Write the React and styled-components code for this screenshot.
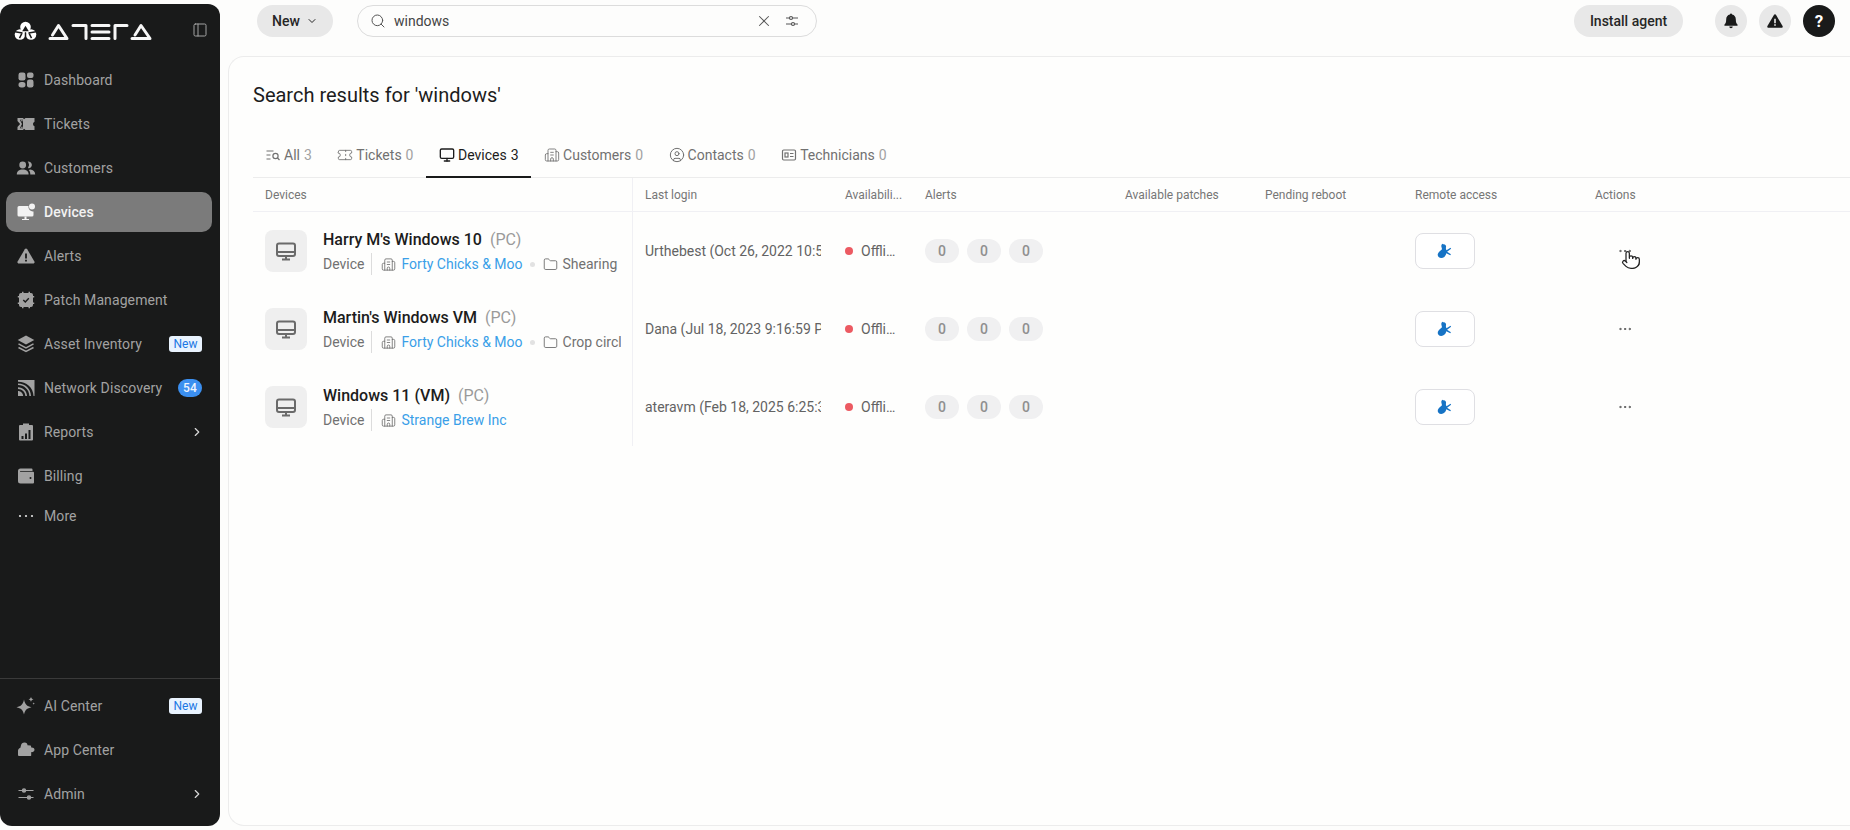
import React from 'react';
import styled, { createGlobalStyle } from 'styled-components';
import {
  Search, X, ChevronDown, ChevronRight, PanelLeft, Ticket, Monitor,
  Building2, CircleUser, Folder, Pointer, MoreHorizontal,
} from 'lucide-react';

const GlobalStyle = createGlobalStyle`
  html, body { margin: 0; padding: 0; height: 100%; background: #fdfdfc; }
  body { font-family: Roboto, "Liberation Sans", sans-serif; color: #1c1c1c; overflow: hidden; }
  * { box-sizing: border-box; }
`;

const COLUMNS = '380px 200px 80px 200px 140px 150px 180px 1fr';

const Shell = styled.div`
  display: flex;
  height: 830px;
`;

const Sidebar = styled.aside`
  width: 220px;
  flex: none;
  margin: 4px 0;
  background: #191a1a;
  border-radius: 12px;
  display: flex;
  flex-direction: column;
`;

const Brand = styled.div`
  height: 56px;
  flex: none;
  display: flex;
  align-items: center;
  justify-content: space-between;
  padding: 0 12px 4px 14px;
  color: #a3a3a3;
`;

const NavList = styled.nav`
  display: flex;
  flex-direction: column;
  gap: 4px;
  padding: 0 8px 0 6px;
`;

const BottomNav = styled(NavList)`
  margin-top: auto;
  padding-top: 7px;
  padding-bottom: 12px;
  border-top: 1px solid #3a3a3a;
`;

const NavItem = styled.a`
  height: ${(p) => (p.$short ? '32px' : '40px')};
  display: flex;
  align-items: center;
  gap: 8px;
  padding: 0 10px;
  border-radius: 10px;
  font-size: 14px;
  letter-spacing: 0.1px;
  color: ${(p) => (p.$active ? '#f2f2f2' : '#a2a2a2')};
  background: ${(p) => (p.$active ? '#7b7b7b' : 'transparent')};
  font-weight: ${(p) => (p.$active ? 500 : 400)};
`;

const NavIcon = styled.span`
  width: 20px;
  height: 20px;
  flex: none;
  display: flex;
  align-items: center;
  justify-content: center;
  color: ${(p) => (p.$active ? '#f2f2f2' : '#a2a2a2')};
`;

const NavLabel = styled.span`
  flex: 1;
  white-space: nowrap;
`;

const NewBadge = styled.span`
  height: 16px;
  width: 33px;
  border-radius: 3px;
  background: #e9f3fe;
  color: #1c78e4;
  font-size: 12px;
  line-height: 16px;
  text-align: center;
`;

const CountBadge = styled.span`
  height: 18px;
  width: 24px;
  border-radius: 9px;
  background: #3b8ff0;
  color: #eef5ff;
  font-size: 12px;
  font-weight: 500;
  line-height: 18px;
  text-align: center;
`;

const NavArrow = styled.span`
  display: flex;
  margin-right: -2px;
  color: #d8d8d8;
`;

const Main = styled.div`
  flex: 1;
  min-width: 0;
  margin-left: 8px;
  display: flex;
  flex-direction: column;
`;

const TopBar = styled.header`
  height: 56px;
  flex: none;
  display: flex;
  align-items: center;
  padding: 0 15px 14px 29px;
`;

const PillButton = styled.button`
  height: 32px;
  border: 0;
  border-radius: 16px;
  background: #e8e8e8;
  color: #262626;
  font: 500 14px Roboto, sans-serif;
  display: flex;
  align-items: center;
  justify-content: center;
  gap: 6px;
  width: ${(p) => p.$width};
  padding: 0;
`;

const SearchBox = styled.div`
  width: 460px;
  height: 32px;
  margin-left: 24px;
  border: 1px solid #dcdcdc;
  border-radius: 16px;
  display: flex;
  align-items: center;
  padding: 0 16px 0 12px;
  gap: 8px;
  color: #555;
  font-size: 14px;
`;

const SearchText = styled.span`
  flex: 1;
  color: #444;
`;

const SearchAction = styled.span`
  display: flex;
  margin-right: ${(p) => p.$gap || '0'};
`;

const TopActions = styled.div`
  margin-left: auto;
  display: flex;
  align-items: center;
`;

const RoundButton = styled.span`
  width: 32px;
  height: 32px;
  border-radius: 50%;
  margin-left: ${(p) => p.$gap || '12px'};
  display: flex;
  align-items: center;
  justify-content: center;
  background: ${(p) => (p.$dark ? '#191a1a' : '#e8e8e8')};
  color: ${(p) => (p.$dark ? '#fff' : '#191a1a')};
  font-size: 17px;
  font-weight: 700;
`;

const Panel = styled.main`
  flex: 1;
  min-height: 0;
  margin-bottom: 4px;
  border: 1px solid #ececec;
  border-right: 0;
  border-radius: 16px 0 0 16px;
  padding: 26px 0 0 24px;
  background: #fefefd;
`;

const Title = styled.h1`
  margin: 0;
  font-size: 20px;
  font-weight: 400;
  line-height: 24px;
  color: #1c1c1c;
`;

const Tabs = styled.div`
  margin-top: 27px;
  height: 44px;
  display: flex;
  border-bottom: 1px solid #ececec;
`;

const Tab = styled.div`
  height: 44px;
  padding: 0 12.5px 0 13px;
  display: flex;
  align-items: center;
  gap: 3px;
  font-size: 14px;
  color: ${(p) => (p.$active ? '#1c1c1c' : '#717171')};
  border-bottom: 2px solid ${(p) => (p.$active ? '#191a1a' : 'transparent')};
  margin-bottom: -1px;

  &:first-child {
    padding-left: 12px;
  }
`;

const TabCount = styled.span`
  color: ${(p) => (p.$active ? '#1c1c1c' : '#a2a2a2')};
  margin-left: 1px;
`;

const HeadRow = styled.div`
  display: grid;
  grid-template-columns: ${COLUMNS};
  height: 34px;
  border-bottom: 1px solid #f0f0f4;
`;

const HeadCell = styled.div`
  display: flex;
  align-items: center;
  padding-left: 12px;
  font-size: 12px;
  color: #767676;
  white-space: nowrap;
  ${(p) => p.$first && 'border-right: 1px solid #f0f0f4;'}
`;

const Row = styled.div`
  display: grid;
  grid-template-columns: ${COLUMNS};
  height: 78px;
`;

const Cell = styled.div`
  display: flex;
  align-items: center;
  padding-left: 12px;
  min-width: 0;
  font-size: 14px;
  color: #636363;
`;

const DeviceCell = styled(Cell)`
  gap: 16px;
  padding-right: 11px;
  border-right: 1px solid #f0f0f4;
`;

const DeviceTile = styled.span`
  width: 42px;
  height: 42px;
  flex: none;
  border-radius: 8px;
  background: #efefef;
  color: #6a6a6a;
  display: flex;
  align-items: center;
  justify-content: center;
`;

const DeviceInfo = styled.div`
  min-width: 0;
  flex: 1;
  overflow: hidden;
  padding-top: 2px;
`;

const DeviceName = styled.div`
  display: flex;
  gap: 8px;
  font-size: 16px;
  line-height: 22px;
  font-weight: 500;
  color: #1c1c1c;
  white-space: nowrap;
`;

const DeviceType = styled.span`
  color: #9a9a9a;
  font-weight: 400;
`;

const MetaRow = styled.div`
  display: flex;
  align-items: center;
  height: 22px;
  margin-top: 2px;
  color: #717171;
  white-space: nowrap;
`;

const MetaLabel = styled.span`
  padding-right: 7px;
  margin-right: 9px;
  line-height: 22px;
  border-right: 1px solid #dcdcdc;
`;

const MetaIcon = styled.span`
  display: flex;
  margin-right: 5px;
  color: #6a6a6a;
`;

const CustomerLink = styled.a`
  color: #3a9fe8;
`;

const MetaDot = styled.span`
  width: 5px;
  height: 5px;
  border-radius: 50%;
  background: #e2e2e2;
  margin: 0 8px 0 7px;
  flex: none;
`;

const LoginText = styled.span`
  width: 176px;
  overflow: hidden;
  white-space: nowrap;
`;

const StatusDot = styled.span`
  width: 8px;
  height: 8px;
  flex: none;
  border-radius: 50%;
  margin-right: 8px;
  background: #ec5a62;
`;

const StatusText = styled.span`
  width: 37px;
  overflow: hidden;
  white-space: nowrap;
  text-overflow: ellipsis;
`;

const PillGroup = styled.div`
  display: flex;
  gap: 8px;
`;

const CountPill = styled.span`
  width: 34px;
  height: 24px;
  border-radius: 12px;
  background: #f0f0f1;
  color: #8f8f8f;
  font-size: 14px;
  font-weight: 500;
  display: flex;
  align-items: center;
  justify-content: center;
`;

const RemoteButton = styled.button`
  width: 60px;
  height: 36px;
  padding: 0;
  border: 1px solid #dfdfe3;
  border-radius: 8px;
  background: #fff;
  display: flex;
  align-items: center;
  justify-content: center;
`;

const ActionsCell = styled(Cell)`
  position: relative;
  padding-left: 34px;
  color: #555;
`;

const HandCursor = styled.span`
  position: absolute;
  left: 38px;
  top: 38px;
  display: flex;
  color: #222;
`;

const s = { width: 20, height: 20, viewBox: '0 0 20 20', fill: 'currentColor' };

const DashboardIcon = () => (
  <svg {...s}>
    <rect x="2.5" y="2.5" width="7" height="8" rx="2.2" />
    <rect x="11" y="2.5" width="6.5" height="5.5" rx="2" />
    <rect x="2.5" y="12" width="7" height="5.5" rx="2.7" />
    <rect x="11" y="9.5" width="6.5" height="8" rx="2.2" />
  </svg>
);

const TicketIcon = () => (
  <svg {...s}>
    <path d="M1.5 4h5.500l1 1.300L9.500 4h9v3.700a2.500 2.500 0 0 0 0 4.600V16h-9L8 14.700 7 16H1.500v-3l2.600-3-2.600-3z" />
    <path d="M7 5.700H3.800L6 10l-2.200 4.300H7z" fill="#191a1a" />
    <path d="M4.800 6.300h2v1h-2zM4.800 12.700h2v1h-2z" />
  </svg>
);

const CustomersIcon = () => (
  <svg {...s}>
    <circle cx="6.7" cy="7" r="3.4" />
    <path d="M.8 16.500c0-3.400 2.300-5 5.900-5s5.900 1.600 5.900 5z" />
    <path d="M11.300 3.700a3.400 3.400 0 1 1 1.300 6.600c-.6 0-.7-.3-.4-.7a4.800 4.800 0 0 0 .2-5c-.3-.5-.4-.9-1.100-.9zM14.300 11.600c2.900.3 4.900 1.900 4.900 4.900H14.300c0-2-.3-3.500-1.500-4.600z" />
  </svg>
);

const DevicesIcon = () => (
  <svg {...s}>
    <path d="M3 4h9.500a4.500 4.500 0 0 0 5 5.400V13a1.500 1.500 0 0 1-1.500 1.500H3A1.500 1.500 0 0 1 1.500 13V5.500A1.500 1.500 0 0 1 3 4z" />
    <circle cx="16" cy="4.5" r="3" />
    <path d="M8.500 14.500h2V17h2.500v1H6v-1h2.500z" />
  </svg>
);

const TriangleIcon = ({ size = 20, mark = '#191a1a' }) => (
  <svg width={size} height={size} viewBox="0 0 20 20" fill="currentColor">
    <path d="M10 2.500c.5 0 .9.300 1.200.700l7.200 12.400c.5.900-.1 1.900-1.200 1.900H2.800c-1.100 0-1.700-1-1.200-1.900L8.800 3.200c.3-.4.700-.7 1.200-.7z" />
    <path d="M9.100 7.500h1.800v5H9.100zM9.100 13.700h1.800v1.700H9.100z" fill={mark} />
  </svg>
);

const PatchIcon = () => (
  <svg {...s}>
    <path d="M5 3h1V1.800h1.500V3h5V1.800H14V3h1a2 2 0 0 1 2 2v1h1.200v1.500H17v5h1.200V14H17v1a2 2 0 0 1-2 2h-1v1.200h-1.500V17h-5v1.200H6V17H5a2 2 0 0 1-2-2v-1H1.800v-1.500H3v-5H1.800V6H3V5a2 2 0 0 1 2-2z" />
    <path d="m7.300 10 2 2 3.500-3.700" fill="none" stroke="#191a1a" strokeWidth="1.400" />
  </svg>
);

const LayersIcon = () => (
  <svg {...s}>
    <path d="M10 1.500 18.300 6 10 10.500 1.700 6z" />
    <path d="M2.500 9.800 10 13.800l7.500-4M2.500 13.500 10 17.500l7.500-4" fill="none" stroke="currentColor" strokeWidth="1.500" />
  </svg>
);

const NetworkIcon = () => (
  <svg {...s}>
    <path d="M2 2h16.500v16H17.500C17.300 9.500 10.500 3.800 2 3.700zM2 5.500c7.300 0 12.800 5.400 13 12.500h-1.600C13.200 11.800 8.200 7.200 2 7.100zM2 9.300c4.900 0 8.800 3.800 9 8.700H9.400C9.200 14 6 10.900 2 10.900zM2 13c2.800 0 5 2.200 5.200 5H2z" />
  </svg>
);

const ReportsIcon = () => (
  <svg {...s}>
    <path d="M7 1.500h6V3h3a1 1 0 0 1 1 1v13.500a1 1 0 0 1-1 1H4a1 1 0 0 1-1-1V4a1 1 0 0 1 1-1h3z" />
    <path d="M5.500 14h2v3h-2zM9 11.500h2V17H9zM12.500 8h2v9h-2z" fill="#191a1a" />
  </svg>
);

const WalletIcon = () => (
  <svg {...s}>
    <path d="M4.500 2.500h11a1 1 0 0 1 1 1V5H4.500c-.6 0-.6.800 0 .8H17a1 1 0 0 1 1 1V16.500a1 1 0 0 1-1 1H4.500A2.500 2.500 0 0 1 2 15V5a2.500 2.500 0 0 1 2.500-2.500z" />
    <circle cx="14.5" cy="12" r="1" fill="#191a1a" />
  </svg>
);

const DotsIcon = () => (
  <svg {...s}>
    <circle cx="4" cy="10" r="1.1" fill="#e4e4e4" />
    <circle cx="10" cy="10" r="1.1" fill="#e4e4e4" />
    <circle cx="16" cy="10" r="1.1" fill="#e4e4e4" />
  </svg>
);

const SparkleIcon = () => (
  <svg {...s}>
    <path d="M8 3.500c.9 4.800 2.900 6.800 7.500 7.700-4.600.9-6.600 2.900-7.500 7.300C7.100 14.100 5.100 12.100.5 11.200 5.100 10.300 7.100 8.300 8 3.500z" />
    <path d="M15 .8c.3 1.700.9 2.300 2.500 2.600-1.600.3-2.200.9-2.500 2.600-.3-1.700-.9-2.300-2.500-2.600 1.600-.3 2.200-.9 2.500-2.600zM17.700 6.300c.1.800.5 1.200 1.300 1.300-.8.1-1.200.5-1.300 1.300-.1-.8-.5-1.200-1.300-1.300.8-.1 1.200-.5 1.300-1.300z" />
  </svg>
);

const PuzzleIcon = () => (
  <svg {...s}>
    <path d="M8.500 2.500c2 0 3 1.300 3 2.800l3 .2c.3 0 .5.200.5.500l.2 1.500c1.500-.3 3.300.6 3.300 2.300s-1.800 2.600-3.300 2.300v3.400c0 .300-.2.500-.5.500H3a1 1 0 0 1-1-1v-4c-.1-1.500 1-3 2.400-3.300L5 5.300c.2-1.600 1.600-2.800 3.500-2.800z" />
  </svg>
);

const AdminIcon = () => (
  <svg {...s} fill="none" stroke="currentColor" strokeWidth="1.2">
    <path d="M2.500 6.500h15M2.500 13.500h15" />
    <circle cx="8" cy="6.5" r="1.6" fill="currentColor" />
    <circle cx="13" cy="13.500" r="1.6" fill="currentColor" />
  </svg>
);

const FilterIcon = () => (
  <svg width="16" height="16" viewBox="0 0 16 16" fill="none" stroke="currentColor" strokeWidth="1.2">
    <path d="M2 5h3.500M8.500 5H14M2 11h5.500M10.500 11H14" />
    <circle cx="7" cy="5" r="1.5" />
    <circle cx="9" cy="11" r="1.5" />
  </svg>
);

const AllIcon = () => (
  <svg width="16" height="16" viewBox="0 0 16 16" fill="none" stroke="currentColor" strokeWidth="1.2">
    <path d="M1.500 4h7M1.500 8h4M1.500 12h4" />
    <circle cx="10.5" cy="9" r="2.6" />
    <path d="m12.500 11 2 2" />
  </svg>
);

const IdCardIcon = () => (
  <svg width="16" height="16" viewBox="0 0 16 16" fill="none" stroke="currentColor" strokeWidth="1.2">
    <rect x="1.5" y="3" width="13" height="10" rx="1.2" />
    <rect x="4" y="6" width="3" height="4" />
    <path d="M9 6.500h3.500M9 9.500h3.500" />
  </svg>
);

const BellIcon = () => (
  <svg width="18" height="18" viewBox="0 0 18 18" fill="currentColor">
    <path d="M9 1.500c.6 0 1 .4 1.100 1 2.300.5 3.700 2.400 3.700 4.800 0 3 .6 4.300 1.800 5.500.3.400.1.900-.4.900H2.800c-.5 0-.7-.5-.4-.9C3.600 11.600 4.200 10.300 4.200 7.300c0-2.400 1.400-4.300 3.700-4.800.1-.6.500-1 1.100-1z" />
    <path d="M7.300 14.500h3.400c0 .9-.8 1.700-1.700 1.700s-1.700-.8-1.700-1.700z" />
  </svg>
);

const PcIcon = () => (
  <svg width="24" height="24" viewBox="0 0 24 24" fill="none" stroke="currentColor" strokeWidth="2">
    <rect x="3" y="4.5" width="18" height="12.5" rx="2" />
    <path d="M3 13h18" />
    <path d="M12 17v3M8 20.500h8" />
  </svg>
);

const RemoteIcon = () => (
  <svg width="16" height="16" viewBox="0 0 16 16" fill="#1673c5">
    <path d="M6 1.300c2-.5 3.500 1 3 3-.3 1.200 0 2 .5 3l4-2.500.6 1-4 3 3.800 2.500-.6 1-4-2c-.5 2.700-2.500 4.700-5 4.700-2.500 0-4-2-3.500-4 .5-2 2.500-3 4-4.500.5-1-.5-2-.5-3.500 0-1 .6-2 1.700-2.200z" />
  </svg>
);

const Logo = () => (
  <svg width="138" height="24" viewBox="0 0 138 24" fill="none">
    <circle cx="11.5" cy="9" r="5.300" fill="#fff" />
    <circle cx="6" cy="16.500" r="5.300" fill="#fff" />
    <circle cx="17" cy="16.500" r="5.300" fill="#fff" />
    <path d="M11.500 7.800 14.800 13.200H8.200z" fill="#191a1a" />
    <path d="M11.500 15v7M1 13.700l7.500 1.300M22 13.700 14.500 15M8 15.200l-2.500 5M15 15.200l2.500 5" stroke="#191a1a" strokeWidth="1.500" />
    <g stroke="#f6f6f6" strokeWidth="3" strokeLinejoin="round" strokeLinecap="round">
      <path d="M36 20.500h17L44.500 7.500 38.500 17" />
      <path d="M59 7.500h13V20.500" />
      <path d="M78 7.500h17M78 14h17M78 20.500h17" />
      <path d="M101 20.500V7.500h12" />
      <path d="M118 20.500h18L127 7.500 121 17" />
    </g>
  </svg>
);

const navMain = [
  { label: 'Dashboard', icon: <DashboardIcon /> },
  { label: 'Tickets', icon: <TicketIcon /> },
  { label: 'Customers', icon: <CustomersIcon /> },
  { label: 'Devices', icon: <DevicesIcon />, active: true },
  { label: 'Alerts', icon: <TriangleIcon /> },
  { label: 'Patch Management', icon: <PatchIcon /> },
  { label: 'Asset Inventory', icon: <LayersIcon />, tag: 'new' },
  { label: 'Network Discovery', icon: <NetworkIcon />, count: 54 },
  { label: 'Reports', icon: <ReportsIcon />, arrow: true },
  { label: 'Billing', icon: <WalletIcon /> },
  { label: 'More', icon: <DotsIcon />, short: true },
];

const navBottom = [
  { label: 'AI Center', icon: <SparkleIcon />, tag: 'new' },
  { label: 'App Center', icon: <PuzzleIcon /> },
  { label: 'Admin', icon: <AdminIcon />, arrow: true },
];

const tabs = [
  { label: 'All', count: 3, icon: <AllIcon /> },
  { label: 'Tickets', count: 0, icon: <Ticket size={16} strokeWidth={1.3} /> },
  { label: 'Devices', count: 3, icon: <Monitor size={16} strokeWidth={2} />, active: true },
  { label: 'Customers', count: 0, icon: <Building2 size={16} strokeWidth={1.3} /> },
  { label: 'Contacts', count: 0, icon: <CircleUser size={16} strokeWidth={1.5} /> },
  { label: 'Technicians', count: 0, icon: <IdCardIcon /> },
];

const headers = ['Devices', 'Last login', 'Availabili...', 'Alerts', 'Available patches', 'Pending reboot', 'Remote access', 'Actions'];

const devices = [
  { name: "Harry M's Windows 10", customer: 'Forty Chicks & Moo', folder: 'Shearing', login: 'Urthebest (Oct 26, 2022 10:52:14 AM)', hover: true },
  { name: "Martin's Windows VM", customer: 'Forty Chicks & Moo', folder: 'Crop circles', login: 'Dana (Jul 18, 2023 9:16:59 PM)' },
  { name: 'Windows 11 (VM)', customer: 'Strange Brew Inc', login: 'ateravm (Feb 18, 2025 6:25:31 AM)' },
];

function NavEntry({ item }) {
  return (
    <NavItem $active={item.active} $short={item.short}>
      <NavIcon $active={item.active}>{item.icon}</NavIcon>
      <NavLabel>{item.label}</NavLabel>
      {item.tag && <NewBadge>New</NewBadge>}
      {item.count && <CountBadge>{item.count}</CountBadge>}
      {item.arrow && <NavArrow><ChevronRight size={14} strokeWidth={2} /></NavArrow>}
    </NavItem>
  );
}

function DeviceRow({ device }) {
  return (
    <Row>
      <DeviceCell>
        <DeviceTile><PcIcon /></DeviceTile>
        <DeviceInfo>
          <DeviceName>{device.name}<DeviceType>(PC)</DeviceType></DeviceName>
          <MetaRow>
            <MetaLabel>Device</MetaLabel>
            <MetaIcon><Building2 size={15} strokeWidth={1.3} /></MetaIcon>
            <CustomerLink>{device.customer}</CustomerLink>
            {device.folder && (
              <>
                <MetaDot />
                <MetaIcon><Folder size={15} strokeWidth={1.4} /></MetaIcon>
                {device.folder}
              </>
            )}
          </MetaRow>
        </DeviceInfo>
      </DeviceCell>
      <Cell><LoginText>{device.login}</LoginText></Cell>
      <Cell><StatusDot /><StatusText>Offline</StatusText></Cell>
      <Cell>
        <PillGroup>
          <CountPill>0</CountPill>
          <CountPill>0</CountPill>
          <CountPill>0</CountPill>
        </PillGroup>
      </Cell>
      <Cell />
      <Cell />
      <Cell>
        <RemoteButton><RemoteIcon /></RemoteButton>
      </Cell>
      <ActionsCell>
        <MoreHorizontal size={16} strokeWidth={1.5} />
        {device.hover && (
          <HandCursor><Pointer size={20} fill="#fff" strokeWidth={1.5} /></HandCursor>
        )}
      </ActionsCell>
    </Row>
  );
}

export default function App() {
  return (
    <>
      <GlobalStyle />
      <Shell>
        <Sidebar>
          <Brand>
            <Logo />
            <PanelLeft size={16} strokeWidth={1.5} />
          </Brand>
          <NavList>
            {navMain.map((item) => <NavEntry key={item.label} item={item} />)}
          </NavList>
          <BottomNav>
            {navBottom.map((item) => <NavEntry key={item.label} item={item} />)}
          </BottomNav>
        </Sidebar>
        <Main>
          <TopBar>
            <PillButton $width="76px">New <ChevronDown size={12} /></PillButton>
            <SearchBox>
              <Search size={16} strokeWidth={1.5} />
              <SearchText>windows</SearchText>
              <SearchAction $gap="3px"><X size={18} strokeWidth={1.4} /></SearchAction>
              <SearchAction><FilterIcon /></SearchAction>
            </SearchBox>
            <TopActions>
              <PillButton $width="109px">Install agent</PillButton>
              <RoundButton $gap="32px"><BellIcon /></RoundButton>
              <RoundButton><TriangleIcon size={18} mark="#e8e8e8" /></RoundButton>
              <RoundButton $dark>?</RoundButton>
            </TopActions>
          </TopBar>
          <Panel>
            <Title>Search results for 'windows'</Title>
            <Tabs>
              {tabs.map((t) => (
                <Tab key={t.label} $active={t.active}>
                  {t.icon}
                  {t.label}
                  <TabCount $active={t.active}>{t.count}</TabCount>
                </Tab>
              ))}
            </Tabs>
            <HeadRow>
              {headers.map((h, i) => <HeadCell key={h} $first={i === 0}>{h}</HeadCell>)}
            </HeadRow>
            {devices.map((d) => <DeviceRow key={d.name} device={d} />)}
          </Panel>
        </Main>
      </Shell>
    </>
  );
}
